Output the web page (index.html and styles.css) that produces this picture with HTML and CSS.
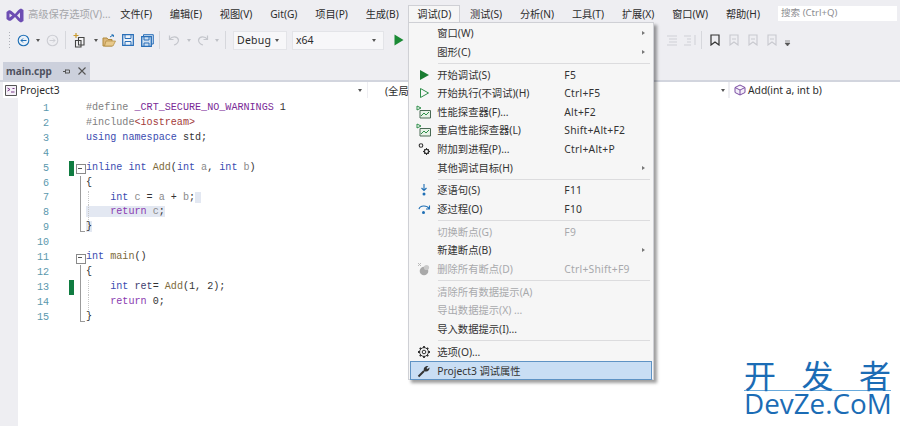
FILE: index.html
```html
<!DOCTYPE html>
<html lang="zh">
<head>
<meta charset="utf-8">
<title>main.cpp</title>
<link rel="stylesheet" href="styles.css">
</head>
<body>
<div class="app">
  <header class="menubar">
    <svg class="logo" width="18" height="15" viewBox="0 0 18 15"><path d="M2.500 2.500C4 1.500 5.500 2.500 9 6 11 3.500 13 1 15 .5L17.500 2V13L15 14.500C13 14 11 11.500 9 9 5.500 12.500 4 13.500 2.500 12.500L.5 11V4Z" fill="#6d4db3"/><path d="M3.500 5.500 6.300 7.500 3.500 9.500ZM14 4.500V10.500L11 7.500Z" fill="#e9e6f2"/></svg>
    <span class="mi dim first">高级保存选项(V)...</span>
    <span class="mi">文件(F)</span>
    <span class="mi">编辑(E)</span>
    <span class="mi">视图(V)</span>
    <span class="mi">Git(G)</span>
    <span class="mi">项目(P)</span>
    <span class="mi">生成(B)</span>
    <div class="mi open">
      调试(D)
      <div class="dropdown">
        <div class="item"><i></i><span>窗口(W)</span><em></em><b class="arr"></b></div>
        <div class="item"><i></i><span>图形(C)</span><em></em><b class="arr"></b></div>
        <hr>
        <div class="item"><i><svg width="12" height="12" viewBox="0 0 12 12"><path d="M2 1 11 6 2 11Z" fill="#1a7d32"/></svg></i><span>开始调试(S)</span><em>F5</em></div>
        <div class="item"><i><svg width="12" height="12" viewBox="0 0 12 12"><path d="M2.500 1.500 10.500 6 2.500 10.500Z" fill="none" stroke="#2f8f4a"/></svg></i><span>开始执行(不调试)(H)</span><em>Ctrl+F5</em></div>
        <div class="item"><i><svg width="16" height="14" viewBox="0 0 16 14"><path d="M1 1 5 3 1 5Z" fill="none" stroke="#2f8f4a"/><path d="M4 5.500H14.500V13H4Z" fill="#e8f2e8" stroke="#4a6a55"/><path d="M5 11 8 8 10 10 13 7" fill="none" stroke="#2f8f4a"/></svg></i><span>性能探查器(F)...</span><em>Alt+F2</em></div>
        <div class="item"><i><svg width="16" height="14" viewBox="0 0 16 14"><path d="M1 1 5 3 1 5Z" fill="none" stroke="#2f8f4a"/><path d="M4 5.500H14.500V13H4Z" fill="#e8f2e8" stroke="#4a6a55"/><path d="M5 11 8 8 10 10 13 7" fill="none" stroke="#2f8f4a"/></svg></i><span>重启性能探查器(L)</span><em>Shift+Alt+F2</em></div>
        <div class="item"><i><svg width="14" height="14" viewBox="0 0 14 14"><circle cx="4" cy="3.500" r="1.800" fill="none" stroke="#333" stroke-width="1.100"/><circle cx="9.500" cy="9.500" r="2.100" fill="none" stroke="#333" stroke-width="1.300"/><path d="M9.500 6V7M9.500 12V13M6 9.500H7M12 9.500H13M7 7 7.800 7.800M12 12 11.200 11.200M12 7 11.200 7.800M7 12 7.800 11.200" stroke="#333"/></svg></i><span>附加到进程(P)...</span><em>Ctrl+Alt+P</em></div>
        <div class="item"><i></i><span>其他调试目标(H)</span><em></em><b class="arr"></b></div>
        <hr>
        <div class="item"><i><svg width="12" height="14" viewBox="0 0 12 14"><path d="M6 1V7M3.500 5 6 7.500 8.500 5" fill="none" stroke="#1f6fb5" stroke-width="1.100"/><circle cx="6" cy="11" r="1.500" fill="#1f6fb5"/></svg></i><span>逐语句(S)</span><em>F11</em></div>
        <div class="item"><i><svg width="14" height="12" viewBox="0 0 14 12"><path d="M2 6C3 2 10 2 12 5.500M12.500 2.500V6H9" fill="none" stroke="#1f6fb5" stroke-width="1.100"/><circle cx="6.500" cy="9.500" r="1.500" fill="#1f6fb5"/></svg></i><span>逐过程(O)</span><em>F10</em></div>
        <hr>
        <div class="item off"><i></i><span>切换断点(G)</span><em>F9</em></div>
        <div class="item"><i></i><span>新建断点(B)</span><em></em><b class="arr"></b></div>
        <div class="item off"><i><svg width="14" height="14" viewBox="0 0 14 14"><circle cx="7" cy="9" r="4.300" fill="#a9a9a9"/><circle cx="9.500" cy="5.500" r="2.600" fill="#c9c9c9"/><path d="M1 1 4 4M4 1 1 4" stroke="#bbb"/></svg></i><span>删除所有断点(D)</span><em>Ctrl+Shift+F9</em></div>
        <hr>
        <div class="item off"><i></i><span>清除所有数据提示(A)</span><em></em></div>
        <div class="item off"><i></i><span>导出数据提示(X) ...</span><em></em></div>
        <div class="item"><i></i><span>导入数据提示(I)...</span><em></em></div>
        <hr>
        <div class="item"><i><svg width="14" height="14" viewBox="0 0 14 14"><circle cx="7" cy="7" r="1.800" fill="none" stroke="#333"/><circle cx="7" cy="7" r="4.400" fill="none" stroke="#333"/><path d="M7 1V3M7 11V13M1 7H3M11 7H13M2.800 2.800 4 4M10 10 11.200 11.200M11.200 2.800 10 4M4 10 2.800 11.200" stroke="#333" stroke-width="1.800"/></svg></i><span>选项(O)...</span><em></em></div>
        <div class="item sel"><i><svg width="14" height="14" viewBox="0 0 14 14"><path d="M1.500 12.500 7 7" stroke="#333" stroke-width="2"/><path d="M7 7C6 4 8 1.500 11.500 2L9.500 4 10.500 5 12.500 3.500C13 6.500 10 8.500 7 7Z" fill="#333"/></svg></i><span>Project3 调试属性</span><em></em></div>
      </div>
    </div>
    <span class="mi">测试(S)</span>
    <span class="mi">分析(N)</span>
    <span class="mi">工具(T)</span>
    <span class="mi">扩展(X)</span>
    <span class="mi">窗口(W)</span>
    <span class="mi">帮助(H)</span>
    <div class="search">搜索 (Ctrl+Q)</div>
  </header>

  <div class="toolbar">
    <span class="grip"></span>
    <svg class="t-back" width="13" height="13" viewBox="0 0 13 13"><circle cx="6.500" cy="6.500" r="5.300" fill="#eaf1f9" stroke="#1f6fb5" stroke-width="1.100"/><path d="M9.500 6.500H4M6 4.500 4 6.500 6 8.500" fill="none" stroke="#1f6fb5"/></svg>
    <span class="caret t-c1"></span>
    <svg class="t-fwd" width="13" height="13" viewBox="0 0 13 13"><circle cx="6.500" cy="6.500" r="5.300" fill="none" stroke="#cdced4" stroke-width="1.100"/><path d="M3.500 6.500H9M7 4.500 9 6.500 7 8.500" fill="none" stroke="#cdced4"/></svg>
    <span class="vsep t-s1"></span>
    <svg class="t-new" width="15" height="16" viewBox="0 0 15 16"><path d="M3 1V6M.5 3.500H5.500" stroke="#c99a2e" stroke-width="1.200"/><path d="M5.500 5.500H11V13H5.500Z M2.500 8.500H8V15H2.500Z" fill="#f4f4f6" stroke="#444" stroke-width="1.100"/></svg>
    <span class="caret t-c2"></span>
    <svg class="t-open" width="14" height="13" viewBox="0 0 14 13"><path d="M1 4H5L6 5.500H10V12H1Z" fill="#dcb67a" stroke="#b08a3c"/><path d="M2.500 12 4 7H13.500L11 12Z" fill="#e8c98c" stroke="#b08a3c" stroke-width=".7"/><path d="M8 3 11 1M9.500 .8 11.500 1 11.200 3" fill="none" stroke="#1f6fb5"/></svg>
    <svg class="t-save" width="12" height="12" viewBox="0 0 12 12"><path d="M.7 .7H11.300V11.300H.7Z" fill="#eef3fa" stroke="#2a6fb8" stroke-width="1.300"/><path d="M3 1V4.500H9V1M3 11V7.500H9V11" fill="none" stroke="#2a6fb8"/></svg>
    <svg class="t-saveall" width="13" height="13" viewBox="0 0 13 13"><path d="M2.500 .7H12.300V10H2.500Z" fill="#cfe0f2" stroke="#2a6fb8"/><path d="M.7 2.700H10.300V12.300H.7Z" fill="#cfe0f2" stroke="#2a6fb8" stroke-width="1.300"/><path d="M3 3V6H8V3M3 12V9H8V12" fill="none" stroke="#2a6fb8"/></svg>
    <span class="vsep t-s2"></span>
    <svg class="t-undo" width="12" height="12" viewBox="0 0 12 12"><path d="M1.500 1.500V5.500H5.500M1.500 5.500C4 2 9.500 2 10.500 6 10.500 8.500 8 10.500 6 11" fill="none" stroke="#c4c6cc" stroke-width="1.200"/></svg>
    <span class="caret off t-c3"></span>
    <svg class="t-redo" width="12" height="12" viewBox="0 0 12 12"><path d="M10.500 1.500V5.500H6.500M10.500 5.500C8 2 2.500 2 1.500 6 1.500 8.500 4 10.500 6 11" fill="none" stroke="#c4c6cc" stroke-width="1.200"/></svg>
    <span class="caret off t-c4"></span>
    <span class="vsep t-s3"></span>
    <div class="combo c-debug"><span>Debug</span><span class="caret"></span></div>
    <div class="combo c-x64"><span>x64</span><span class="caret"></span></div>
    <svg class="t-play" width="10" height="12" viewBox="0 0 10 12"><path d="M.5 .5 9.500 6 .5 11.500Z" fill="#1a8a34"/></svg>
    <svg class="t-ind" width="12" height="12" viewBox="0 0 12 12"><path d="M1 2H11M3 5H11M3 8H11M1 11H11" stroke="#cfd0d6"/></svg>
    <svg class="t-ind2" width="14" height="12" viewBox="0 0 14 12"><path d="M1 2H8M4 5H8M4 8H8M1 11H8M12 1V11" stroke="#cfd0d6"/></svg>
    <span class="vsep t-s4"></span>
    <svg class="t-bm" width="10" height="12" viewBox="0 0 10 12"><path d="M1 1H9V11L5 8 1 11Z" fill="none" stroke="#333" stroke-width="1.200"/></svg>
    <svg class="t-bm2" width="10" height="12" viewBox="0 0 10 12"><path d="M1 1H9V11L5 8 1 11ZM3 5H7" fill="none" stroke="#c8c9cf" stroke-width="1.100"/></svg>
    <svg class="t-bm3" width="10" height="12" viewBox="0 0 10 12"><path d="M1 1H9V11L5 8 1 11ZM3 5H7" fill="none" stroke="#c8c9cf" stroke-width="1.100"/></svg>
    <svg class="t-bm4" width="10" height="12" viewBox="0 0 10 12"><path d="M1 1H9V11L5 8 1 11ZM3 5H7" fill="none" stroke="#c8c9cf" stroke-width="1.100"/></svg>
    <svg class="t-more" width="7" height="7" viewBox="0 0 7 7"><path d="M1 1H6M1 3 3.500 6 6 3Z" fill="#555" stroke="#555" stroke-width=".6"/></svg>
  </div>

  <div class="tabstrip">
    <div class="tab"><span class="tabname">main.cpp</span><svg class="pin" width="7" height="7" viewBox="0 0 7 7"><path d="M0 3.500H2.500M2.500 1.500V5.500M2.500 2H6.500V5H2.500" fill="none" stroke="#555"/></svg><svg width="8" height="8" viewBox="0 0 8 8"><path d="M.5 .5 7.500 7.500M7.500 .5 .5 7.500" stroke="#555" stroke-width="1.100"/></svg></div>
  </div>

  <div class="selectors">
    <div class="sel-box s1"><svg width="12" height="11" viewBox="0 0 12 11"><path d="M.5 .5H11.500V10.500H.5Z" fill="#f5f0f8" stroke="#555"/><path d="M2.500 3 5 4.500 2.500 6M6 7H9.500M7.500 3.500H9.500" fill="none" stroke="#7a3a8a"/></svg><span>Project3</span><span class="caret"></span></div>
    <div class="sel-box s2"><span>(全局范围)</span><span class="caret"></span></div>
    <div class="sel-box s3"><svg width="12" height="12" viewBox="0 0 12 12"><path d="M6 1 11 3.500V8.500L6 11 1 8.500V3.500ZM1 3.500 6 6 11 3.500M6 6V11" fill="#f3eef8" stroke="#7b4ea3"/></svg><span>Add(int a, int b)</span></div>
  </div>

  <main class="editor">
    <div class="row"><span class="ln">1</span><span class="mk"></span><span class="fold"></span><code><b class="k0">#define</b> <b class="mac">_CRT_SECURE_NO_WARNINGS</b> 1</code></div>
    <div class="row"><span class="ln">2</span><span class="mk"></span><span class="fold"></span><code><b class="k0">#include</b><b class="str">&lt;iostream&gt;</b></code></div>
    <div class="row"><span class="ln">3</span><span class="mk"></span><span class="fold"></span><code><b class="kw">using namespace</b> std;</code></div>
    <div class="row"><span class="ln">4</span><span class="mk"></span><span class="fold"></span><code></code></div>
    <div class="row"><span class="ln">5</span><span class="mk on"></span><span class="fold box"></span><code><b class="kw">inline int</b> <b class="fn">Add</b>(<b class="kw">int</b> <b class="par">a</b>, <b class="kw">int</b> <b class="par">b</b>)</code></div>
    <div class="row"><span class="ln">6</span><span class="mk"></span><span class="fold bar"></span><code>{</code></div>
    <div class="row"><span class="ln">7</span><span class="mk"></span><span class="fold bar"></span><code class="g">    <b class="kw">int</b> <b class="par">c</b> = <b class="par">a</b> + <b class="par">b</b>;<b class="hl"> </b></code></div>
    <div class="row"><span class="ln">8</span><span class="mk"></span><span class="fold bar"></span><code class="g"><b class="hl">    <b class="ret">return</b> <b class="par">c</b>;</b></code></div>
    <div class="row"><span class="ln">9</span><span class="mk"></span><span class="fold end"></span><code><b class="hl">}</b></code></div>
    <div class="row"><span class="ln">10</span><span class="mk"></span><span class="fold"></span><code></code></div>
    <div class="row"><span class="ln">11</span><span class="mk"></span><span class="fold box"></span><code><b class="kw">int</b> <b class="fn">main</b>()</code></div>
    <div class="row"><span class="ln">12</span><span class="mk"></span><span class="fold bar"></span><code>{</code></div>
    <div class="row"><span class="ln">13</span><span class="mk on"></span><span class="fold bar"></span><code class="g">    <b class="kw">int</b> <b class="var">ret</b>= <b class="fn">Add</b>(1, 2);</code></div>
    <div class="row"><span class="ln">14</span><span class="mk"></span><span class="fold bar"></span><code class="g">    <b class="ret">return</b> 0;</code></div>
    <div class="row"><span class="ln">15</span><span class="mk"></span><span class="fold end"></span><code>}</code></div>
  </main>

  <div class="watermark">
    <div class="wm-cn"><span>开</span><span>发</span><span>者</span></div>
    <div class="wm-en">DevZe.CoM</div>
  </div>
</div>
</body>
</html>
```
FILE: styles.css
```css
* { box-sizing: border-box; }
html, body { margin: 0; height: 100%; }
body {
  font-family: "Noto Sans", "Noto Sans CJK SC", sans-serif;
  font-size: 10.300px;
  color: #2b2b2b;
  background: #eeeef2;
  overflow: hidden;
}
.app { position: relative; width: 900px; height: 426px; display: flex; flex-direction: column; }

/* menu bar */
.menubar { height: 26px; display: flex; align-items: center; padding: 1px 0 0 6px; white-space: nowrap; flex: none; }
.logo { flex: none; margin-right: 4px; margin-top: 3px; }
.mi { font-size: 10.200px; line-height: 14px; margin-left: 17.800px; }
.mi.first { margin-left: 0; }
.mi.dim { color: #a5a6aa; font-size: 10.300px; margin-right: -8px; }
.open {
  position: relative;
  margin-left: 9.500px;
  margin-right: -8px;
  padding: 1px 8px 2px 8px;
  height: 18px;
  margin-top: 1px;
  background: #f6f6f6;
  border: 1px solid #cfd0d5;
  border-bottom: 0;
  z-index: 3;
}
.dropdown {
  position: absolute;
  left: -1px;
  top: 16px;
  width: 246px;
  height: 358px;
  background: #f6f6f6;
  border: 1px solid #cfd0d5;
  box-shadow: 3px 3px 3px rgba(0, 0, 0, .38);
  padding: 1px 1px;
  font-size: 10.300px;
  z-index: 2;
}
.item { height: 18.600px; display: flex; align-items: center; color: #333; }
.item i { width: 27px; flex: none; display: flex; justify-content: center; align-items: center; font-style: normal; }
.item span { width: 127px; flex: none; white-space: nowrap; }
.item em { flex: 1; font-style: normal; letter-spacing: .25px; white-space: nowrap; }
.item .arr { flex: none; margin-right: 7px; width: 0; height: 0; border-left: 3px solid #777; border-top: 2.500px solid transparent; border-bottom: 2.500px solid transparent; }
.item.off { color: #a8a9ac; }
.item.sel { background: #c9def4; outline: 1px solid #5f93c4; outline-offset: -1px; height: 19px; }
.dropdown hr { border: 0; border-top: 1px solid #dcdcde; margin: 2px 2px 1.200px 28px; }

.search { margin-left: 18px; width: 119px; height: 15px; background: #fff; color: #8d8e92; line-height: 14px; padding-left: 3px; font-size: 9.600px; flex: none; }

/* toolbar */
.toolbar { height: 26px; flex: none; display: flex; align-items: center; padding-left: 8px; padding-top: 2px; }
.toolbar > * { flex: none; }
.grip { width: 3px; height: 18px; background-image: radial-gradient(#aeb0b8 .7px, transparent 1px); background-size: 3px 3px; }
.caret { display: inline-block; width: 0; height: 0; border-left: 2.500px solid transparent; border-right: 2.500px solid transparent; border-top: 3px solid #555; flex: none; }
.caret.off { border-top-color: #bfc1c7; }
.vsep { width: 1px; height: 18px; background: #d6d7dc; }
.t-back { margin-left: 6px; }
.t-c1 { margin-left: 6px; }
.t-fwd { margin-left: 6px; }
.t-s1 { margin-left: 6px; }
.t-new { margin-left: 7px; }
.t-c2 { margin-left: 6px; }
.t-open { margin-left: 4px; }
.t-save { margin-left: 6px; }
.t-saveall { margin-left: 7px; }
.t-s2 { margin-left: 5px; }
.t-undo { margin-left: 8px; }
.t-c3 { margin-left: 7px; }
.t-redo { margin-left: 6px; }
.t-c4 { margin-left: 6px; }
.t-s3 { margin-left: 6px; }
.combo { height: 19px; background: #f7f7f9; border: 1px solid #e3e4e8; display: flex; align-items: center; justify-content: space-between; font-size: 10.500px; padding: 0 7px 0 3px; }
.c-debug { width: 54px; margin-left: 7px; letter-spacing: .25px; padding-left: 3px; }
.c-x64 { width: 92px; margin-left: 5px; }
.t-play { margin-left: 10px; }
.t-ind { margin-left: 262px; }
.t-ind2 { margin-left: 5px; }
.t-s4 { margin-left: 4px; }
.t-bm { margin-left: 8px; }
.t-bm2 { margin-left: 9px; }
.t-bm3 { margin-left: 9px; }
.t-bm4 { margin-left: 9px; }
.t-more { margin-left: 7px; margin-top: 7px; }

/* tabs */
.tabstrip { margin-top: 10px; height: 20px; flex: none; padding-left: 3px; border-bottom: 2px solid #d2d5de; }
.tab { width: 87px; height: 18px; background: #ccd0dc; display: flex; align-items: center; padding-left: 3px; color: #4f5260; }
.tabname { font-weight: 700; font-size: 10px; width: 57px; flex: none; }
.pin { flex: none; margin-right: 8px; }

/* selector row */
.selectors { height: 16px; flex: none; display: flex; padding-left: 3px; gap: 1px; background: #eeeef2; }
.sel-box { background: #fff; display: flex; align-items: center; gap: 3px; padding: 0 3px 0 2px; position: relative; white-space: nowrap; }
.sel-box .caret { position: absolute; right: 5px; top: 7px; }
.s1 { width: 364px; }
.s2 { width: 360px; padding-left: 17px; }
.s2 .caret { right: 3px; }
.s3 { flex: 1; margin-left: 1px; padding-left: 4px; gap: 2px; }

/* editor */
.editor { flex: 1; background: #fff; border-left: 18px solid #eeeef2; padding-top: 3px; font-family: "Liberation Mono", "DejaVu Sans Mono", monospace; }
.row { height: 14.930px; display: flex; align-items: center; }
.ln { width: 31px; text-align: right; color: #5b98ad; font-size: 10.100px; flex: none; }
.mk { width: 5px; height: 100%; margin-left: 20px; flex: none; }
.mk.on { background: #107c41; }
.fold { position: relative; width: 10px; height: 100%; margin-left: 2px; flex: none; }
.fold.box::before { content: ""; position: absolute; left: 0; top: 3.500px; width: 8px; height: 8px; border: 1px solid #8a8a8a; background: #fff; }
.fold.box::after { content: ""; position: absolute; left: 2px; top: 7px; width: 4px; height: 1px; background: #555; }
.fold.bar::before, .fold.end::before { content: ""; position: absolute; left: 4px; top: 0; bottom: 0; width: 1px; background: #9a9a9a; }
.fold.end::before { bottom: 3px; }
.fold.end::after { content: ""; position: absolute; left: 4px; bottom: 3px; width: 5px; height: 1px; background: #9a9a9a; }
code { position: relative; font-family: inherit; font-size: 10.100px; line-height: 14.930px; height: 100%; white-space: pre; color: #333; }
code b { font-weight: 400; }
code.g::before { content: ""; position: absolute; left: 2px; top: 0; bottom: 0; border-left: 1px dotted #c6c6c6; }
.k0 { color: #808080; }
.mac { color: #7a2a96; }
.str { color: #a33a3a; }
.kw { color: #3a4bb0; }
.fn { color: #7d6a3a; }
.par { color: #8a8a8a; }
.var { color: #3d3d6e; }
.ret { color: #8a3ab0; }
.hl { background: #e3e8f2; }

/* watermark */
.watermark { position: absolute; left: 744px; top: 358px; width: 147px; color: #1b6cb5; }
.wm-cn { display: flex; justify-content: space-between; font-size: 32px; line-height: 33px; height: 33px; border-bottom: 1px solid #69aadc; font-family: "Noto Sans CJK SC", sans-serif; font-weight: 400; }
.wm-en { font-family: "Open Sans", sans-serif; font-size: 27.800px; line-height: 25px; white-space: nowrap; }
```
